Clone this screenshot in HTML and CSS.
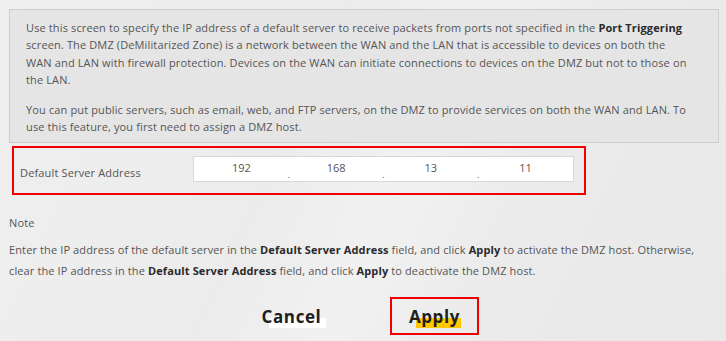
FILE: index.html
```html
<!DOCTYPE html>
<html>
<head>
<meta charset="utf-8">
<link rel="stylesheet" href="styles.css">
</head>
<body>
<div class="page">
  <div class="info">
    <p>Use this screen to specify the IP address of a default server to receive packets from ports not specified in the <b>Port Triggering</b><br>screen. The DMZ (DeMilitarized Zone) is a network between the WAN and the LAN that is accessible to devices on both the<br>WAN and LAN with firewall protection. Devices on the WAN can initiate connections to devices on the DMZ but not to those on<br>the LAN.</p>
    <p class="second">You can put public servers, such as email, web, and FTP servers, on the DMZ to provide services on both the WAN and LAN. To<br>use this feature, you first need to assign a DMZ host.</p>
  </div>
  <div class="field">
    <span class="label">Default Server Address</span>
    <div class="ip">
      <span class="seg">192</span><span class="dot">.</span>
      <span class="seg">168</span><span class="dot">.</span>
      <span class="seg">13</span><span class="dot">.</span>
      <span class="seg">11</span>
    </div>
  </div>
  <div class="note">
    <div class="note-title">Note</div>
    <p>Enter the IP address of the default server in the <b>Default Server Address</b> field, and click <b>Apply</b> to activate the DMZ host. Otherwise,<br>clear the IP address in the <b>Default Server Address</b> field, and click <b>Apply</b> to deactivate the DMZ host.</p>
  </div>
  <div class="buttons">
    <button class="btn cancel"><span class="hl-white"></span><span class="txt">Cancel</span></button>
    <button class="btn apply"><span class="hl-yellow"></span><span class="txt">Apply</span></button>
  </div>
</div>
</body>
</html>
```
FILE: styles.css
```css
html, body {
  margin: 0;
  padding: 0;
}
body {
  width: 726px;
  height: 341px;
  overflow: hidden;
  background: linear-gradient(115deg, #efefef 0%, #ececec 40%, #f1f1f1 55%, #ebebeb 70%, #e9e9e9 100%);
  font-family: "Open Sans", "DejaVu Sans", sans-serif;
  color: #555;
}
.page {
  padding: 9px 0 0 0;
}
.info {
  margin-left: 9px;
  width: 710px;
  box-sizing: border-box;
  background: #e5e5e5;
  border: 1px solid #cdcdcd;
  padding: 9px 6px 7px 16px;
  font-size: 11px;
  letter-spacing: 0.13px;
  line-height: 17.4px;
  white-space: nowrap;
}
.info p {
  margin: 0;
}
.info p.second {
  margin-top: 12px;
}
b {
  color: #2a2a2a;
  font-weight: 700;
}
.field {
  margin: 3px 0 0 12px;
  width: 574px;
  height: 49px;
  box-sizing: border-box;
  border: 2px solid #f20000;
  display: flex;
  align-items: center;
  padding-left: 6px;
}
.label {
  width: 173px;
  font-size: 11px;
  letter-spacing: 0.15px;
  color: #555;
  padding-top: 4px;
}
.ip {
  width: 381px;
  height: 26px;
  box-sizing: border-box;
  background: #fff;
  border: 1px solid #d9d9d9;
  display: flex;
  align-items: center;
  font-size: 11px;
  color: #555;
  margin-top: -4px;
}
.seg {
  flex: 1;
  text-align: center;
  padding-bottom: 2px;
}
.dot {
  width: 0;
  overflow: visible;
  display: flex;
  justify-content: center;
  padding-top: 12px;
  font-size: 9px;
}
.note {
  padding-left: 9px;
  font-size: 11px;
  letter-spacing: 0.12px;
}
.note-title {
  margin-top: 20px;
  line-height: 16px;
}
.note p {
  margin: 8px 0 0 0;
  line-height: 21px;
  white-space: nowrap;
}
.buttons {
  display: flex;
  justify-content: center;
  gap: 54px;
  margin-top: 16px;
}
.btn {
  position: relative;
  background: none;
  border: 2px solid transparent;
  font-family: "Open Sans", sans-serif;
  font-weight: 700;
  font-size: 17px;
  letter-spacing: 0.6px;
  color: #1e1e1e;
  padding: 0;
  height: 38px;
  width: 89px;
  display: flex;
  align-items: center;
  justify-content: center;
}
.btn.apply {
  border-color: #f20000;
}
.btn .txt {
  position: relative;
}
.hl-white {
  position: absolute;
  left: 20px;
  top: 19px;
  width: 57px;
  height: 10px;
  background: #fff;
}
.hl-yellow {
  position: absolute;
  left: 24px;
  top: 19px;
  width: 45px;
  height: 10px;
  background: #ffc800;
}
```
